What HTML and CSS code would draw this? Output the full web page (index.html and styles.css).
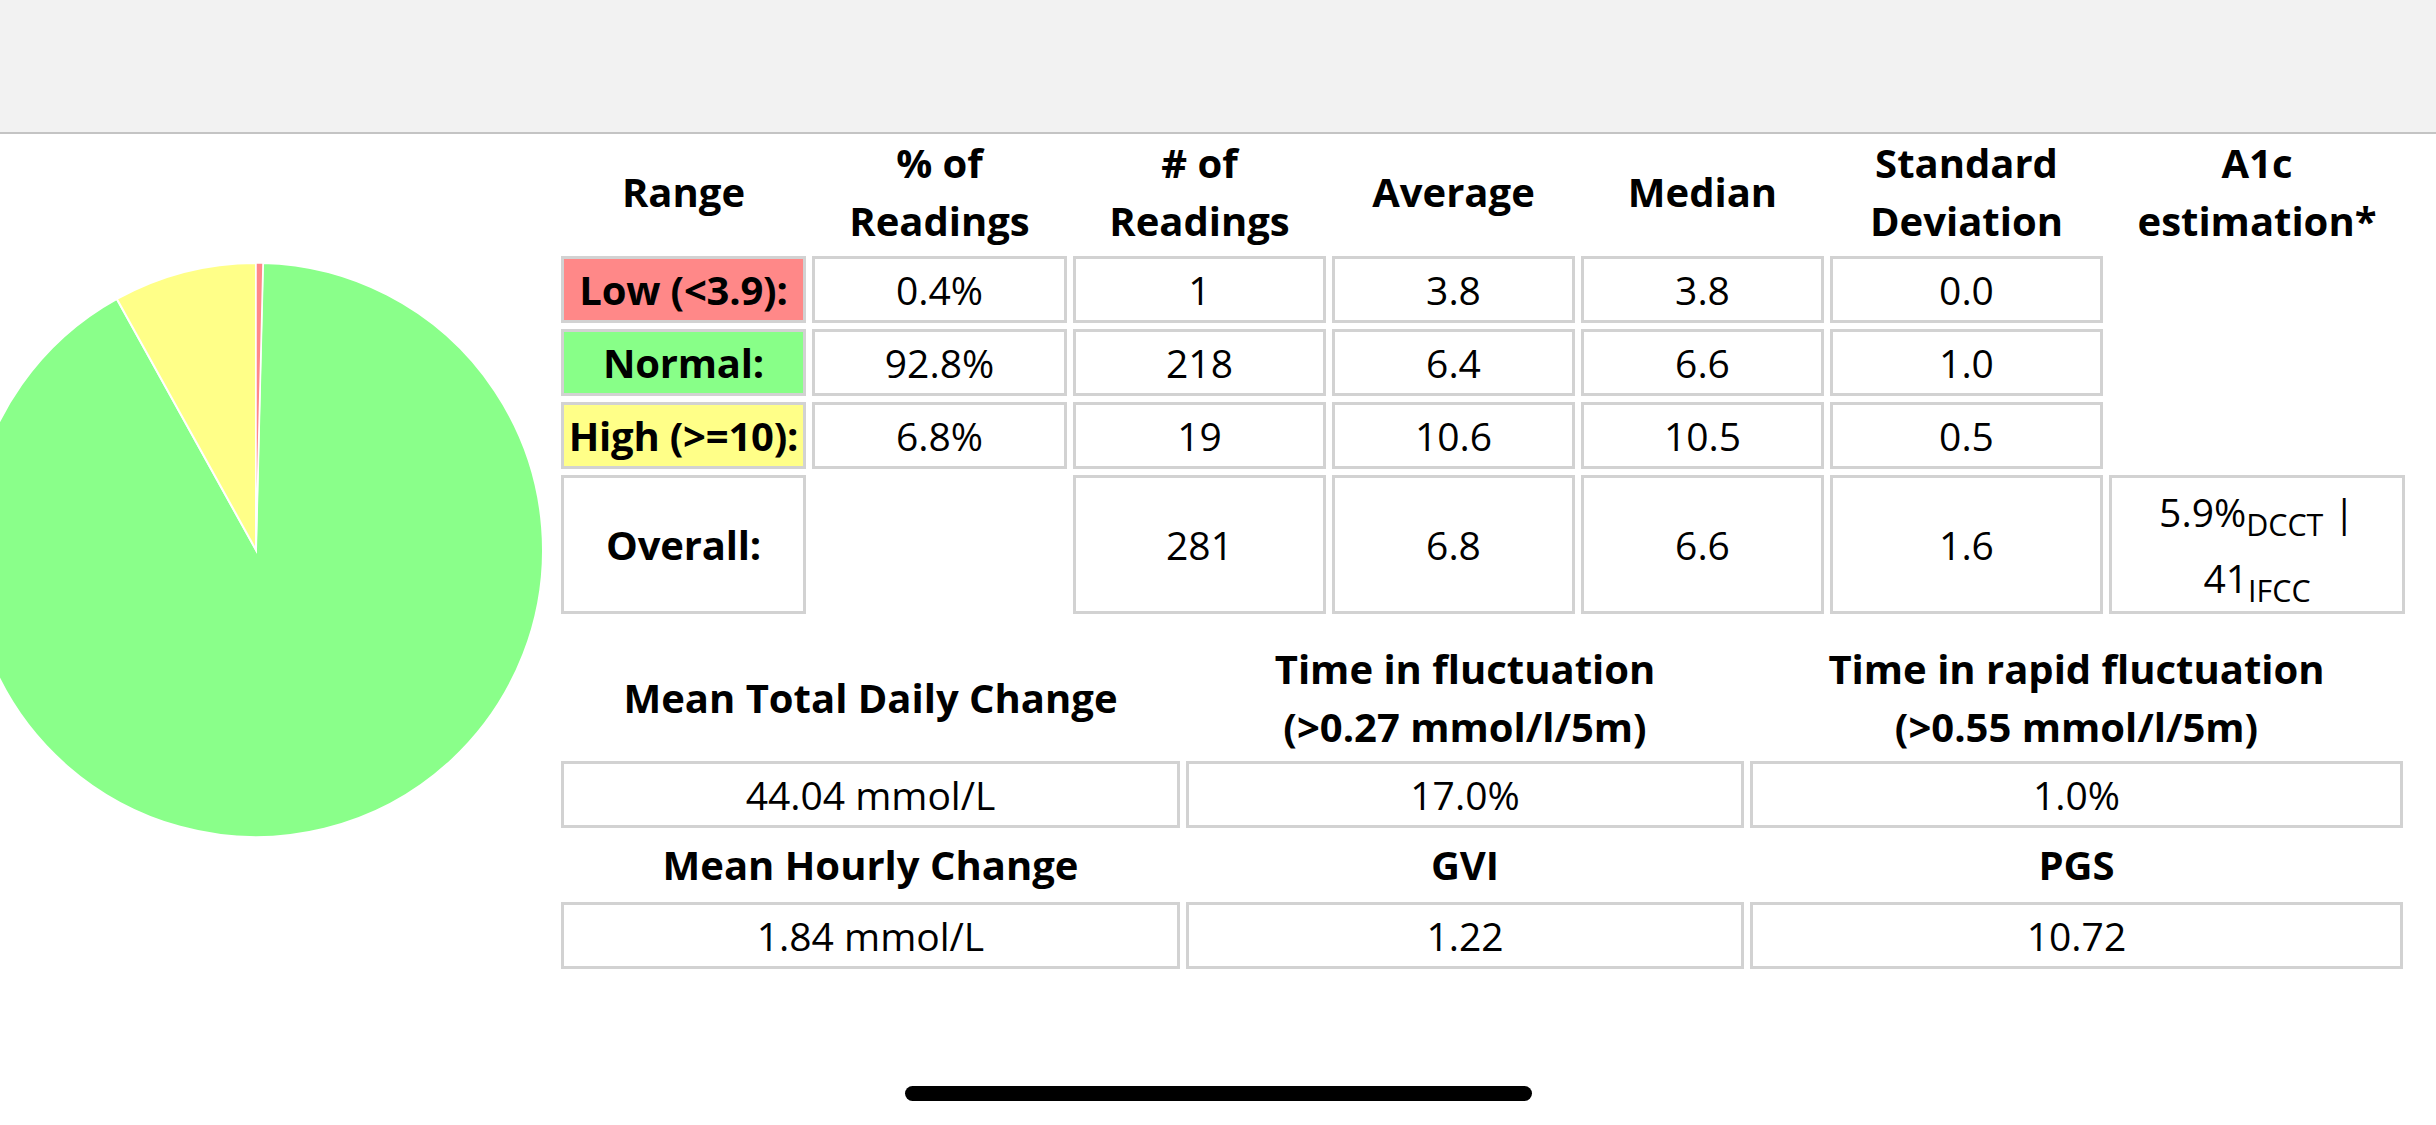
FILE: index.html
```html
<!DOCTYPE html>
<html>
<head>
<meta charset="utf-8">
<link rel="stylesheet" href="styles.css">
</head>
<body>
<div class="topbar"></div>
<div class="main">
  <div class="pie-col">
    <svg class="pie" width="555" height="720" viewBox="0 0 555 720">
      <path d="M256,416 L263.01,129.09 A287,287 0 1 1 116.86,164.98 Z" fill="#8aff8a" stroke="#fff" stroke-width="2"/>
      <path d="M256,416 L116.86,164.98 A287,287 0 0 1 256,129 Z" fill="#ffff88" stroke="#fff" stroke-width="2"/>
      <path d="M256,416 L256,129 A287,287 0 0 1 263.01,129.09 Z" fill="#ff8888" stroke="#fff" stroke-width="1.5"/>
    </svg>
  </div>
  <div class="tables">
    <table class="stats">
      <thead>
        <tr>
          <th class="w-range">Range</th>
          <th class="w-pct">% of<br>Readings</th>
          <th class="w-num">#&nbsp;of<br>Readings</th>
          <th class="w-avg">Average</th>
          <th class="w-med">Median</th>
          <th class="w-sd">Standard<br>Deviation</th>
          <th class="w-a1c">A1c<br>estimation*</th>
        </tr>
      </thead>
      <tbody>
        <tr>
          <td class="label low">Low (&lt;3.9):</td>
          <td class="cell">0.4%</td>
          <td class="cell">1</td>
          <td class="cell">3.8</td>
          <td class="cell">3.8</td>
          <td class="cell">0.0</td>
          <td class="empty"></td>
        </tr>
        <tr>
          <td class="label normal">Normal:</td>
          <td class="cell">92.8%</td>
          <td class="cell">218</td>
          <td class="cell">6.4</td>
          <td class="cell">6.6</td>
          <td class="cell">1.0</td>
          <td class="empty"></td>
        </tr>
        <tr>
          <td class="label high">High (&gt;=10):</td>
          <td class="cell">6.8%</td>
          <td class="cell">19</td>
          <td class="cell">10.6</td>
          <td class="cell">10.5</td>
          <td class="cell">0.5</td>
          <td class="empty"></td>
        </tr>
        <tr class="overall">
          <td class="label">Overall:</td>
          <td class="empty"></td>
          <td class="cell">281</td>
          <td class="cell">6.8</td>
          <td class="cell">6.6</td>
          <td class="cell">1.6</td>
          <td class="cell a1c">5.9%<sub>DCCT</sub> |<br>41<sub>IFCC</sub></td>
        </tr>
      </tbody>
    </table>

    <table class="variability">
      <tr class="vhead">
        <th class="w-c1">Mean Total Daily Change</th>
        <th class="w-c2">Time in fluctuation<br>(&gt;0.27 mmol/l/5m)</th>
        <th class="w-c3">Time in rapid fluctuation<br>(&gt;0.55 mmol/l/5m)</th>
      </tr>
      <tr>
        <td class="cell">44.04 mmol/L</td>
        <td class="cell">17.0%</td>
        <td class="cell">1.0%</td>
      </tr>
      <tr class="vhead-single">
        <th>Mean Hourly Change</th>
        <th>GVI</th>
        <th>PGS</th>
      </tr>
      <tr>
        <td class="cell">1.84 mmol/L</td>
        <td class="cell">1.22</td>
        <td class="cell">10.72</td>
      </tr>
    </table>
  </div>
</div>
<div class="home-indicator"></div>
</body>
</html>
```
FILE: styles.css
```css
html, body {
  margin: 0;
  padding: 0;
}
body {
  width: 2436px;
  height: 1125px;
  overflow: hidden;
  background: #ffffff;
  font-family: "Open Sans", "Noto Sans", sans-serif;
  color: #000;
  position: relative;
}
.topbar {
  height: 132px;
  background: #f2f2f2;
  border-bottom: 2px solid #c4c4c4;
}
.main {
  display: flex;
  align-items: flex-start;
}
.pie-col {
  width: 555px;
  flex: 0 0 555px;
}
.pie {
  display: block;
}
.tables {
  display: flex;
  flex-direction: column;
  gap: 14px;
}
table {
  border-collapse: separate;
  border-spacing: 6px;
  table-layout: fixed;
  font-size: 39px;
}
th {
  font-weight: 700;
  font-size: 40px;
  padding: 0;
  text-align: center;
  vertical-align: middle;
  box-sizing: border-box;
}
td {
  box-sizing: border-box;
  text-align: center;
  vertical-align: middle;
  padding: 0 4px;
  height: 67px;
  line-height: 58px;
}
.stats {
  width: 1856px;
  margin-top: -6px;
}
.stats thead th {
  line-height: 58px;
  height: 116px;
}
.w-range { width: 245px; }
.w-pct { width: 255px; }
.w-num { width: 253px; }
.w-avg { width: 243px; }
.w-med { width: 243px; }
.w-sd { width: 273px; }
.w-a1c { width: 296px; }

.cell, .label {
  border: 3px solid #d2d2d2;
}
.cell {
  font-weight: 400;
}
.label {
  font-weight: 700;
  font-size: 40px;
  padding: 0;
  white-space: nowrap;
  letter-spacing: -0.2px;
}
.low { background: #ff8888; }
.normal { background: #88ff88; }
.high { background: #ffff88; }
.empty {
  border: none;
}
.overall td {
  height: 139px;
}
.a1c {
  line-height: 66px;
}
sub {
  font-size: 0.78em;
  line-height: 0;
  vertical-align: -9px;
}

.variability {
  width: 1854px;
}
.w-c1 { width: 619px; }
.w-c2 { width: 558px; }
.w-c3 { width: 653px; }
.vhead th {
  line-height: 57.5px;
  height: 115px;
}
.vhead-single th {
  height: 62px;
  line-height: 62px;
}

.home-indicator {
  position: absolute;
  left: 905px;
  top: 1086px;
  width: 627px;
  height: 15px;
  border-radius: 8px;
  background: #000;
}
```
